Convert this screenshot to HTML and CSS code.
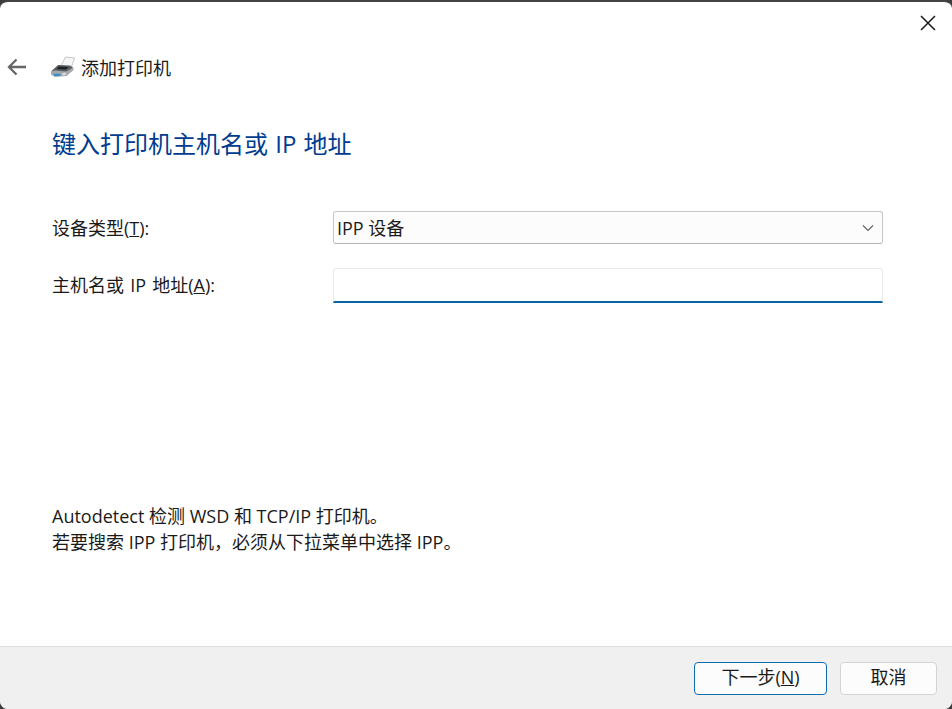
FILE: index.html
```html
<!DOCTYPE html>
<html lang="zh-CN">
<head>
<meta charset="utf-8">
<title>添加打印机</title>
<link rel="stylesheet" href="styles.css">
</head>
<body>
<div class="window">
  <div class="topbar">
    <button class="close" aria-label="关闭">
      <svg width="16" height="16" viewBox="0 0 16 16"><path d="M1 1L15 15M15 1L1 15" stroke="#1a1a1a" stroke-width="1.500" fill="none"/></svg>
    </button>
  </div>
  <div class="nav">
    <svg class="back" width="20" height="18" viewBox="0 0 20 18"><path d="M19 9H2M9.500 1.500L2 9l7.500 7.500" stroke="#666" stroke-width="2.300" fill="none"/></svg>
    <svg class="printer" width="26" height="22" viewBox="0 0 26 22">
      <path d="M11 10L15.500 1 24.500 2 21.500 11z" fill="#f6f6f6" stroke="#b9b9b9" stroke-width=".8"/>
      <path d="M1.500 15L8 9 20 9.500 23 11.500 17 18 4 19z" fill="#5b5f62"/>
      <path d="M9 10.500L18.500 11 16 13.500 6.500 13z" fill="#1f2224"/>
      <path d="M1 15.500L5 14.500 16 15.500 23.500 11.500 23.500 14 16.500 20 5 21 1 18.500z" fill="#a3a8ac"/>
      <path d="M3.500 17.500L11 18 10 20 4 20z" fill="#3b8fc6"/>
      <path d="M12.500 17L16 16.500 15.500 19 12.500 19.500z" fill="#d9dde0"/>
    </svg>
    <span class="nav-title">添加打印机</span>
  </div>
  <main class="content">
    <h1 class="heading">键入打印机主机名或 IP 地址</h1>
    <div class="form">
      <div class="row">
        <label class="label">设备类型(<u>T</u>):</label>
        <div class="select">
          <span class="select-value">IPP 设备</span>
          <svg width="12" height="8" viewBox="0 0 12 8"><path d="M1 1.500L6 6.500 11 1.500" stroke="#606060" stroke-width="1.100" fill="none"/></svg>
        </div>
      </div>
      <div class="row">
        <label class="label">主机名或 IP 地址(<u>A</u>):</label>
        <div class="input"></div>
      </div>
    </div>
    <div class="note">
      <p>Autodetect 检测 WSD 和 TCP/IP 打印机。</p>
      <p>若要搜索 IPP 打印机，必须从下拉菜单中选择 IPP。</p>
    </div>
  </main>
  <footer class="footer">
    <button class="btn primary">下一步(<u>N</u>)</button>
    <button class="btn cancel">取消</button>
  </footer>
</div>
</body>
</html>
```
FILE: styles.css
```css
* { box-sizing: border-box; }
html, body { margin: 0; padding: 0; background: #3c3c3c; }
body { width: 952px; height: 709px; overflow: hidden; font-family: "Open Sans", "Noto Sans CJK SC", sans-serif; color: #1a1a1a; }
.window {
  width: 952px; height: 709px;
  display: flex; flex-direction: column;
  background: #fff;
  border-top: 2px solid #444;
  border-radius: 8px;
  overflow: hidden;
}
.topbar { height: 40px; display: flex; justify-content: flex-end; align-items: flex-start; flex: none; }
.close { width: 16px; height: 16px; margin: 13px 16px 0 0; padding: 0; border: 0; background: none; display: block; }
.close svg { display: block; }
.nav { height: 52px; flex: none; display: flex; align-items: center; padding-left: 7px; font-size: 18px; }
.back { flex: none; margin-top: -2px; }
.printer { flex: none; margin-left: 23px; margin-top: -2px; }
.nav-title { margin-left: 5px; line-height: 24px; margin-top: -1px; }
.content { flex: 1; min-height: 0; padding: 0 69px 0 52px; display: flex; flex-direction: column; }
.heading { margin: 32px 0 0; font-size: 24px; word-spacing: 1px; font-weight: 400; color: #003c8f; line-height: 36px; height: 36px; }
.form { margin-top: 49px; display: flex; flex-direction: column; gap: 24px; }
.row { display: flex; align-items: center; height: 33px; }
.label { width: 281px; flex: none; font-size: 18px; line-height: 24px; word-spacing: 1.500px; }
.select {
  flex: 1; height: 33px; display: flex; align-items: center; justify-content: space-between;
  padding: 0 8px 0 3px; background: #fcfcfc; border: 1px solid #c8c8c8; border-bottom-color: #b4b4b4; border-radius: 3px;
  font-size: 18px;
}
.select-value { margin-top: -2px; }
.input { flex: 1; height: 35px; margin-top: 2px; background: #fff; border: 1px solid #e9e9e9; border-bottom: 2px solid #0a65a4; border-radius: 3px 3px 0 0; }
.note { margin-top: auto; margin-bottom: 91px; font-size: 18px; line-height: 26px; }
.note p { margin: 0; }
.footer {
  height: 63px; flex: none; background: #f0f0f0; border-top: 1px solid #dfdfdf;
  display: flex; justify-content: flex-end; align-items: flex-start; gap: 13px; padding: 15px 15px 0 0;
}
.btn { height: 33px; font: inherit; font-size: 18px; line-height: 1; padding: 0 0 4px; background: #fcfcfc; color: #1a1a1a; border-radius: 4px; border: 1px solid #d4d4d4; }
.primary { width: 133px; border-color: #0f6cae; }
.cancel { width: 97px; }
```
